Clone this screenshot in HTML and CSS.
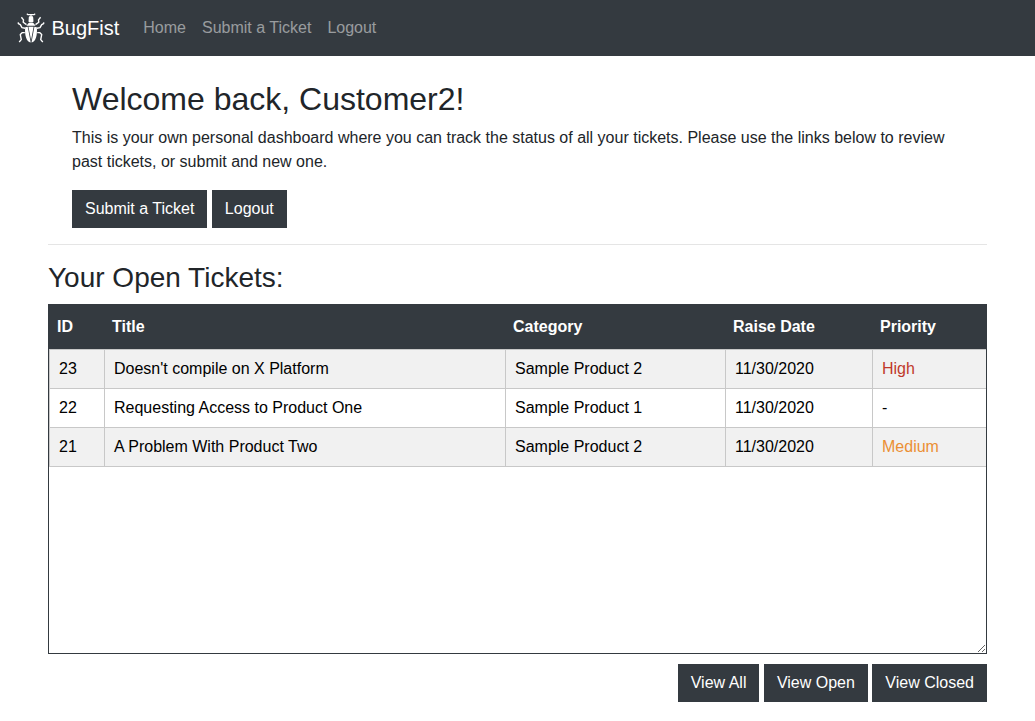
FILE: index.html
```html
<!DOCTYPE html>
<html lang="en">
<head>
<meta charset="utf-8">
<title>BugFist</title>
<link rel="stylesheet" href="styles.css">
</head>
<body>
<nav class="navbar">
  <a class="brand">
    <svg class="logo" viewBox="0 0 30 30" fill="none" stroke="#fff" stroke-width="1.4" stroke-linejoin="round">
      <path d="M10.8 .8 12 1.7 18 1.7 19.2 .8M15 4V1.7" stroke-width="1.2"/>
      <path d="M13.2 3.2h3.6l.4 1.4 .3 3.8-1 1.2h-3l-1-1.2 .3-3.8z" fill="#fff" stroke="none"/>
      <path d="M12.6 10h4.8l2.2 2.8h-9.2z" fill="#fff" stroke="none"/>
      <path d="M9.2 14.2 11.7 13.8 14.7 29.6C10.4 28.8 8.4 22 9.2 14.2zM12.4 13.7h5.2L15.1 27zM20.8 14.2 18.4 13.8 15.5 29.6C19.8 28.8 21.6 22 20.8 14.2z" fill="#fff" stroke="none"/>
      <path d="M10.5 11.6 7.2 9.3 7.5 6.9 5.4 4.3M19.5 11.6 22.8 9.3 22.5 6.9 24.6 4.3M9.2 15.2 6 14.6 4.3 11.6 2.4 10.6 2.2 9.4M20.8 15.2 24 14.6 25.7 11.6 27.6 10.6 27.8 9.4M8.8 19.6H6.4L4.3 21.6 5.3 26.6 3.2 29M21.2 19.6H23.6L25.7 21.6 24.7 26.6 26.8 29"/>
    </svg>
    <span>BugFist</span>
  </a>
  <a class="nav-link">Home</a>
  <a class="nav-link">Submit a Ticket</a>
  <a class="nav-link">Logout</a>
</nav>
<main class="container">
  <section class="welcome">
    <h2>Welcome back, Customer2!</h2>
    <p>This is your own personal dashboard where you can track the status of all your tickets. Please use the links below to review past tickets, or submit and new one.</p>
    <div class="actions">
      <a class="btn">Submit a Ticket</a>
      <a class="btn">Logout</a>
    </div>
  </section>
  <h3>Your Open Tickets:</h3>
  <div class="ticket-box">
    <table class="tickets">
      <thead>
        <tr><th class="col-id">ID</th><th class="col-title">Title</th><th class="col-category">Category</th><th class="col-date">Raise Date</th><th>Priority</th></tr>
      </thead>
      <tbody>
        <tr><td>23</td><td>Doesn't compile on X Platform</td><td>Sample Product 2</td><td>11/30/2020</td><td class="high">High</td></tr>
        <tr><td>22</td><td>Requesting Access to Product One</td><td>Sample Product 1</td><td>11/30/2020</td><td>-</td></tr>
        <tr><td>21</td><td>A Problem With Product Two</td><td>Sample Product 2</td><td>11/30/2020</td><td class="medium">Medium</td></tr>
      </tbody>
    </table>
  </div>
  <div class="views">
    <a class="btn">View All</a>
    <a class="btn">View Open</a>
    <a class="btn">View Closed</a>
  </div>
</main>
</body>
</html>
```
FILE: styles.css
```css
* { box-sizing: border-box; }
body {
  margin: 0;
  background: #fff;
  color: #212529;
  font: 16px/24px "Liberation Sans", Arial, sans-serif;
}
h2, h3 { margin: 0; font-weight: 400; line-height: 1.2; }
.navbar {
  display: flex;
  align-items: center;
  height: 56px;
  padding: 0 16px;
  background: #343a40;
}
.brand {
  display: flex;
  align-items: center;
  margin-right: 16px;
  color: #fff;
  font-size: 20px;
  line-height: 30px;
}
.logo { width: 30px; height: 30px; margin-right: 5.5px; }
.nav-link { padding: 8px; color: rgba(255, 255, 255, .5); }
.container { padding: 0 48px; }
.welcome {
  padding: 24px 24px 16px;
  border-bottom: 1px solid #e5e5e5;
}
.welcome h2 { font-size: 32px; margin-bottom: 8px; }
.welcome p { margin: 0 0 16px; }
.btn {
  display: inline-block;
  vertical-align: middle;
  padding: 6px 12px;
  border: 1px solid #343a40;
  background: #343a40;
  color: #fff;
}
h3 { font-size: 28px; margin: 16px 0 9px; }
.ticket-box {
  height: 350px;
  border: 1px solid #343a40;
  overflow: auto;
  resize: both;
}
.tickets {
  width: 100%;
  table-layout: fixed;
  border-collapse: separate;
  border-spacing: 0;
  color: #000;
}
.tickets th {
  height: 44px;
  padding: 0 7px;
  background: #343a40;
  color: #fff;
  text-align: left;
}
.tickets th:first-child { padding-left: 8px; }
.tickets td {
  height: 39px;
  padding: 7px 9px;
  border: solid #c8c8c8;
  border-width: 0 1px 1px 0;
}
.tickets td:first-child { border-left-width: 1px; }
.tickets td:last-child { border-right-width: 0; }
.tickets tbody tr:first-child td { height: 40px; border-top-width: 1px; }
.tickets tbody tr:nth-child(odd) { background: #f1f1f1; }
.col-id { width: 56px; }
.col-title { width: 401px; }
.col-category { width: 220px; }
.col-date { width: 147px; }
.tickets .high { color: #c0392b; }
.tickets .medium { color: #eb8f34; }
.views { text-align: right; margin-top: 10px; }
```
